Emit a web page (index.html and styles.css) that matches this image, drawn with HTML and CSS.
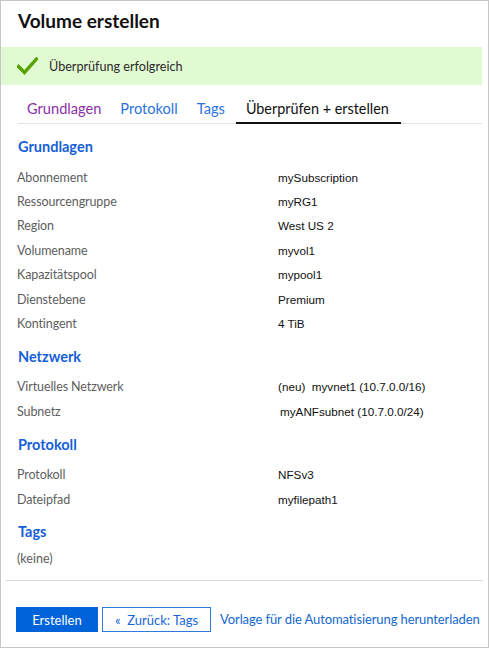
FILE: index.html
```html
<!DOCTYPE html>
<html lang="de">
<head>
<meta charset="utf-8">
<title>Volume erstellen</title>
<link rel="stylesheet" href="styles.css">
</head>
<body>
<div class="frame">
  <header class="header">
    <h1 class="title">Volume erstellen</h1>
  </header>
  <div class="banner">
    <svg class="check" width="21" height="18" viewBox="0 0 21 18" aria-hidden="true">
      <path d="M1.5 9.5 L7.5 15.5 L19.5 2" fill="none" stroke="#57a300" stroke-width="3.4" stroke-linecap="square"/>
    </svg>
    <span class="banner-text">Überprüfung erfolgreich</span>
  </div>
  <nav class="tabs">
    <span class="tab tab-visited">Grundlagen</span>
    <span class="tab tab-link">Protokoll</span>
    <span class="tab tab-link">Tags</span>
    <span class="tab tab-active">Überprüfen + erstellen</span>
  </nav>
  <main class="content">
    <section class="section">
      <h2 class="section-title">Grundlagen</h2>
      <dl class="rows">
        <dt>Abonnement</dt><dd>mySubscription</dd>
        <dt>Ressourcengruppe</dt><dd>myRG1</dd>
        <dt>Region</dt><dd>West US 2</dd>
        <dt>Volumename</dt><dd>myvol1</dd>
        <dt>Kapazitätspool</dt><dd>mypool1</dd>
        <dt>Dienstebene</dt><dd>Premium</dd>
        <dt>Kontingent</dt><dd>4 TiB</dd>
      </dl>
    </section>
    <section class="section">
      <h2 class="section-title">Netzwerk</h2>
      <dl class="rows">
        <dt>Virtuelles Netzwerk</dt><dd>(neu)&nbsp; myvnet1 (10.7.0.0/16)</dd>
        <dt>Subnetz</dt><dd class="indent">myANFsubnet (10.7.0.0/24)</dd>
      </dl>
    </section>
    <section class="section">
      <h2 class="section-title">Protokoll</h2>
      <dl class="rows">
        <dt>Protokoll</dt><dd>NFSv3</dd>
        <dt>Dateipfad</dt><dd>myfilepath1</dd>
      </dl>
    </section>
    <section class="section">
      <h2 class="section-title">Tags</h2>
      <div class="none">(keine)</div>
    </section>
  </main>
  <footer class="footer">
    <button class="btn btn-primary" type="button">Erstellen</button>
    <button class="btn btn-secondary" type="button">«&nbsp; Zurück: Tags</button>
    <a class="footer-link" href="#">Vorlage für die Automatisierung herunterladen</a>
  </footer>
</div>
</body>
</html>
```
FILE: styles.css
```css
* { box-sizing: border-box; }
html, body { margin: 0; padding: 0; background: #ffffff; }
body {
  font-family: Lato, "Open Sans", sans-serif;
  color: #222;
}
.frame {
  width: 489px;
  height: 648px;
  border: 1px solid #c6c6c6;
  display: flex;
  flex-direction: column;
}
.frame > * { flex-shrink: 0; }
.header {
  height: 46px;
  padding: 8px 0 0 17px;
}
.title {
  margin: 0;
  font-size: 19px;
  line-height: 24px;
  font-weight: 700;
  color: #111;
}
.banner {
  height: 38px;
  margin-right: 6px;
  background: #e2fad2;
  display: flex;
  align-items: center;
  padding-left: 16px;
}
.check { flex: none; }
.banner-text {
  margin-left: 11px;
  font-size: 12.6px;
  color: #2b2b2b;
}
.tabs {
  margin: 0 6px 0 17px;
  height: 39px;
  display: flex;
  align-items: flex-end;
  border-bottom: 1px solid #e3e3e3;
}
.tab {
  padding: 0 10px 3px 9px;
  font-size: 14.6px;
  line-height: 20px;
  border-bottom: 2px solid transparent;
  margin-bottom: -1px;
}
.tab-visited { color: #8a2fa8; }
.tab-link { color: #2b74e0; }
.tab-active {
  color: #111;
  border-bottom-color: #111;
  margin-left: 1px;
  padding-left: 10px;
  padding-right: 12px;
  font-size: 14.4px;
}
.content {
  padding: 13px 0 0 16px;
  flex: 1 1 auto;
  min-height: 0;
}
.section + .section { margin-top: 11px; }
.section-title {
  margin: 0 0 8px 1px;
  font-size: 14.5px;
  line-height: 20px;
  font-weight: 700;
  color: #1560d8;
}
.rows {
  margin: 0;
  display: grid;
  grid-template-columns: 261px 1fr;
  grid-auto-rows: 24.4px;
  align-items: center;
}
.rows dt {
  font-size: 12.5px;
  letter-spacing: -0.1px;
  color: #5e5e5e;
}
.rows dd {
  margin: 0;
  font-family: "Liberation Sans", Arial, sans-serif;
  font-size: 11.7px;
  color: #111;
}
.rows dd.indent { padding-left: 2px; }
.none {
  font-size: 12.5px;
  color: #5e5e5e;
  line-height: 20px;
  margin-top: -1px;
}
.footer {
  margin: 0 5px;
  border-top: 1px solid #d6d6d6;
  padding: 26px 0 0 10px;
  display: flex;
  align-items: flex-start;
  height: 67px;
}
.btn {
  font-family: Lato, "Open Sans", sans-serif;
  font-size: 13px;
  height: 25px;
  padding: 0;
  cursor: pointer;
}
.btn-primary {
  width: 82px;
  background: #0063d9;
  color: #fff;
  border: 1px solid #0063d9;
}
.btn-secondary {
  width: 109px;
  margin-left: 4px;
  background: #fff;
  color: #1765d4;
  border: 1px solid #2f7ae0;
}
.footer-link {
  margin-left: 9px;
  font-size: 13px;
  letter-spacing: -0.1px;
  line-height: 25px;
  color: #1468d0;
  text-decoration: none;
  white-space: nowrap;
}
```
